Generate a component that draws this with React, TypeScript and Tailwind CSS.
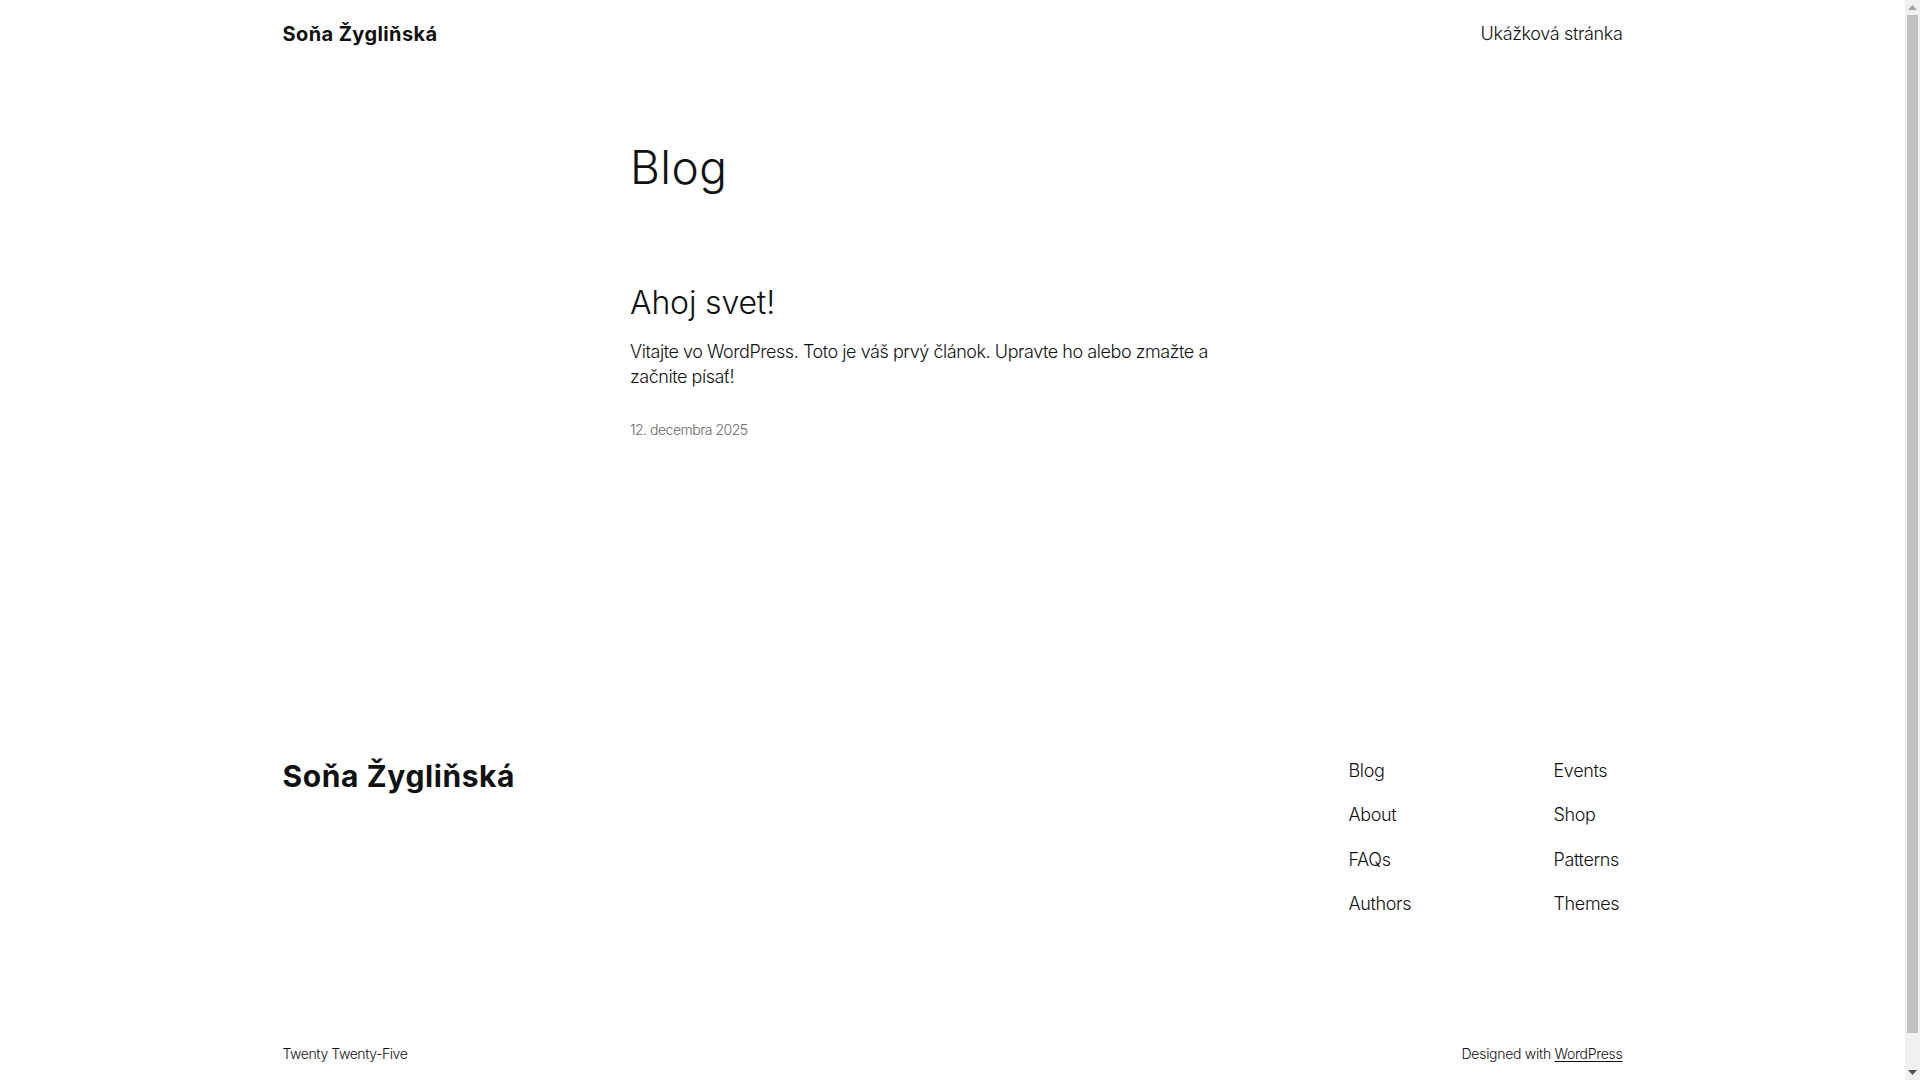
import React from "react";

const footerLinks = [
  ["Blog", "Events"],
  ["About", "Shop"],
  ["FAQs", "Patterns"],
  ["Authors", "Themes"],
];

function Scrollbar() {
  return (
    <div className="sticky top-0 self-start h-[1080px] w-[15px] shrink-0 bg-[#f1f1f1] flex flex-col">
      <div className="h-[15px] flex items-center justify-center">
        <svg width="9" height="5" viewBox="0 0 9 5">
          <path d="M4.5 0 L9 5 L0 5 Z" fill="#a3a3a3" />
        </svg>
      </div>
      <div className="mx-[2px] h-[1018px] bg-[#c1c1c1]" />
      <div className="flex-1" />
      <div className="h-[15px] flex items-center justify-center">
        <svg width="9" height="5" viewBox="0 0 9 5">
          <path d="M0 0 L9 0 L4.5 5 Z" fill="#505050" />
        </svg>
      </div>
    </div>
  );
}

export default function App() {
  return (
    <div className="flex bg-white text-[#111111] font-['Inter','Noto_Sans',sans-serif] font-light">
      <div className="flex-1 min-w-0">
        <header className="mx-auto w-[1340px] flex items-center justify-between py-5">
          <a className="text-[20px] leading-[1.4] font-bold tracking-[0.02em]">Soňa Žygliňská</a>
          <nav className="text-[18px] leading-[1.4] tracking-[-0.02em]">
            <a>Ukážková stránka</a>
          </nav>
        </header>

        <main className="mx-auto w-[645px]">
          <h1 className="mt-[74px] text-[46px] leading-[1.125] font-light tracking-[0.01em]">Blog</h1>

          <article className="mt-[91px]">
            <h2 className="text-[32px] leading-[1.125] font-light tracking-[-0.005em]">Ahoj svet!</h2>
            <p className="mt-[18px] max-w-[630px] text-[18px] leading-[1.4] tracking-[-0.025em]">
              Vitajte vo WordPress. Toto je váš prvý článok. Upravte ho alebo zmažte a začnite písať!
            </p>
            <p className="mt-[31px] text-[14px] leading-[1.4] text-[#686868] tracking-[-0.035em]">12. decembra 2025</p>
          </article>
        </main>

        <footer className="mx-auto w-[1340px] mt-[315px] pb-[48px]">
          <div className="flex items-start justify-between">
            <a className="text-[30px] leading-[1.4] font-bold tracking-[0.02em]">Soňa Žygliňská</a>
            <div className="pt-[3px] grid grid-cols-[205px_69px] text-[18px] leading-[1.4] tracking-[-0.02em] whitespace-nowrap">
              <div className="flex flex-col gap-[19.3px]">
                {footerLinks.map(([left]) => (
                  <a key={left}>{left}</a>
                ))}
              </div>
              <div className="flex flex-col gap-[19.3px]">
                {footerLinks.map(([, right]) => (
                  <a key={right}>{right}</a>
                ))}
              </div>
            </div>
          </div>

          <div className="mt-[128px] flex items-center justify-between text-[14px] leading-[1.4]">
            <p className="tracking-[-0.03em]">Twenty Twenty-Five</p>
            <p className="tracking-[-0.02em]">
              Designed with <a className="underline underline-offset-2">WordPress</a>
            </p>
          </div>
        </footer>
      </div>
      <Scrollbar />
    </div>
  );
}
